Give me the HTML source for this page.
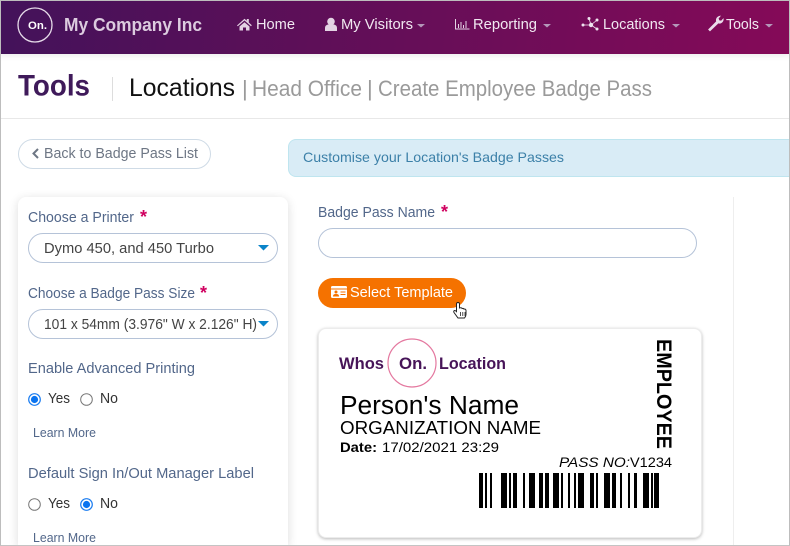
<!DOCTYPE html>
<html><head><meta charset="utf-8"><style>
html,body{margin:0;padding:0;background:#fff;width:790px;height:546px;overflow:hidden}
#p{position:relative;width:790px;height:546px;overflow:hidden;background:#fff;font-family:"Liberation Sans",sans-serif}
#p div{position:absolute;box-sizing:border-box}
svg{position:absolute;left:0;top:0}
</style></head><body><div id="p">
<div style="left:0;top:0;width:790px;height:54px;background:linear-gradient(95deg,#43125a 0%,#5e0f58 40%,#850a58 100%);box-shadow:0 2px 6px rgba(0,0,0,.08)"></div>
<div style="left:0;top:118px;width:790px;height:1px;background:#e8e8e8"></div>
<div style="left:112px;top:77px;width:1px;height:24px;background:#ddd"></div>
<div style="left:18px;top:139px;width:193px;height:30px;border:1px solid #cfdbe6;border-radius:15px"></div>
<div style="left:288px;top:139px;width:502px;height:38px;background:#d9ecf6;border:1px solid #bfe5ef;border-right:0;border-radius:8px 0 0 8px"></div>
<div style="left:18px;top:197px;width:270px;height:349px;background:#fff;border-radius:8px 8px 0 0;box-shadow:0 2px 10px rgba(0,0,0,.14)"></div>
<div style="left:28px;top:233px;width:250px;height:30px;border:1px solid #b5c3d8;border-radius:15px;background:#fff"></div>
<div style="left:28px;top:309px;width:250px;height:30px;border:1px solid #b5c3d8;border-radius:15px;background:#fff"></div>
<div style="left:733px;top:197px;width:1px;height:349px;background:#eee"></div>
<div style="left:318px;top:228px;width:379px;height:30px;border:1px solid #b5c3d8;border-radius:15px"></div>
<div style="left:318px;top:278px;width:148px;height:30px;background:#f57200;border-radius:15px"></div>
<div style="left:318px;top:328px;width:384px;height:210px;background:#fff;border:1px solid #ececec;border-radius:8px;box-shadow:0 1px 3px rgba(0,0,0,.28)"></div>

<svg width="790" height="546" viewBox="0 0 790 546" font-family="'Liberation Sans',sans-serif">
<circle cx="35" cy="25" r="17" fill="none" stroke="#e6dbe9" stroke-width="1.300"/>
<text x="28" y="29" font-size="11" font-weight="700" fill="#fff" textLength="19" lengthAdjust="spacingAndGlyphs">On.</text>
<text x="64" y="31" font-size="18.500" font-weight="700" fill="#dccbdf" textLength="138" lengthAdjust="spacingAndGlyphs">My Company Inc</text>

<g fill="#f1e8f1" font-size="14.500">
<path d="M237 25.500l7.500-6.800 2.300 2v-1.700h2v3.500l3 2.800-.8.900-6.500-5.700-6.700 5.700zM239.500 26.500l5-4.300 5 4.300v4h-3.500v-3h-3v3h-3.500z" fill="#e3d3e3"/>
<text x="256" y="29" textLength="39" lengthAdjust="spacingAndGlyphs">Home</text>
<circle cx="331" cy="21.500" r="3.800" fill="#e3d3e3"/><path d="M325 31v-3c0-2.500 2-3.500 3.500-3.500h5c1.500 0 3.500 1 3.500 3.500v3z" fill="#e3d3e3"/>
<text x="341" y="29" textLength="72" lengthAdjust="spacingAndGlyphs">My Visitors</text>
<text x="473" y="29" textLength="64" lengthAdjust="spacingAndGlyphs">Reporting</text>
<text x="603" y="29" textLength="62" lengthAdjust="spacingAndGlyphs">Locations</text>
<text x="726" y="29" textLength="33" lengthAdjust="spacingAndGlyphs">Tools</text>
</g>
<g fill="#b497b9">
<path d="M417 24h8l-4 3.500zM543 24h8l-4 3.500zM672 24h8l-4 3.500zM765 24h8l-4 3.500z"/>
</g>
<g stroke="#e3d3e3" fill="none" stroke-width="1">
<path d="M455.500 19v10h14"/><path d="M458.500 28v-4M461 28v-6M463.500 28v-3M466 28v-7" />
</g>
<g fill="#efe3ef">
<circle cx="583" cy="25" r="1.500"/><circle cx="589" cy="18.500" r="1.500"/><circle cx="597" cy="20" r="1.500"/><circle cx="597" cy="29" r="1.500"/><circle cx="591" cy="25" r="2.200"/>
<path d="M583 25h8M589 18.500l2 6.500M597 20l-6 5M597 29l-6-4" stroke="#efe3ef" stroke-width=".8"/>
</g>
<path d="M710 31l-1.500-1.500 8-8c-.8-2.500.5-5 3.800-5.500l-2 2.500.8 2 2.200.5 2-2.200c.2 3-2.500 5.200-5 4.200z" fill="#eadcea" stroke="#eadcea" stroke-width=".6"/>

<text x="18" y="95.500" font-size="30" font-weight="700" fill="#3f1a5a" textLength="72" lengthAdjust="spacingAndGlyphs">Tools</text>
<text x="129" y="96" font-size="25" fill="#111" textLength="106" lengthAdjust="spacingAndGlyphs">Locations</text>
<g font-size="22" fill="#9a9a9a">
<text x="242" y="96">|</text>
<text x="252" y="96" textLength="110" lengthAdjust="spacingAndGlyphs">Head Office</text>
<text x="367" y="96">|</text>
<text x="378" y="96" textLength="274" lengthAdjust="spacingAndGlyphs">Create Employee Badge Pass</text>
</g>

<path d="M38 149l-4.500 4.500 4.500 4.500" fill="none" stroke="#6d7684" stroke-width="2"/>
<text x="44" y="158" font-size="14.500" fill="#6d7684" textLength="154" lengthAdjust="spacingAndGlyphs">Back to Badge Pass List</text>
<text x="303" y="162" font-size="14" fill="#3c80a8" textLength="261" lengthAdjust="spacingAndGlyphs">Customise your Location's Badge Passes</text>

<g font-size="14.500" fill="#52678a">
<text x="28" y="222" textLength="106" lengthAdjust="spacingAndGlyphs">Choose a Printer</text>
<text x="28" y="298" textLength="167" lengthAdjust="spacingAndGlyphs">Choose a Badge Pass Size</text>
<text x="28" y="373" textLength="167" lengthAdjust="spacingAndGlyphs">Enable Advanced Printing</text>
<text x="28" y="478" textLength="226" lengthAdjust="spacingAndGlyphs">Default Sign In/Out Manager Label</text>
<text x="318" y="217" textLength="117" lengthAdjust="spacingAndGlyphs">Badge Pass Name</text>
</g>
<g font-size="12.500" fill="#52678a">
<text x="33" y="437" textLength="63" lengthAdjust="spacingAndGlyphs">Learn More</text>
<text x="33" y="542" textLength="63" lengthAdjust="spacingAndGlyphs">Learn More</text>
</g>
<g font-size="18" font-weight="700" fill="#d0005f">
<text x="140" y="223">*</text><text x="200" y="299">*</text><text x="441" y="218">*</text>
</g>
<g font-size="14.500" fill="#444">
<text x="44" y="253" textLength="170" lengthAdjust="spacingAndGlyphs">Dymo 450, and 450 Turbo</text>
<text x="44" y="329" textLength="213" lengthAdjust="spacingAndGlyphs">101 x 54mm (3.976" W x 2.126" H)</text>
</g>
<path d="M258 245h11l-5.500 5.500zM258 321h11l-5.500 5.500z" fill="#0a84c9"/>

<g fill="#fff" stroke="#1a7cf0" stroke-width="1.200"><circle cx="34.500" cy="399.500" r="5.800"/><circle cx="86.500" cy="504.500" r="5.800"/></g>
<circle cx="34.500" cy="399.500" r="3.600" fill="#0a74f0"/><circle cx="86.500" cy="504.500" r="3.600" fill="#0a74f0"/>
<g fill="#fff" stroke="#777" stroke-width="1"><circle cx="86.500" cy="399.500" r="5.800"/><circle cx="34.500" cy="504.500" r="5.800"/></g>
<g font-size="14.500" fill="#333">
<text x="48" y="403" textLength="22" lengthAdjust="spacingAndGlyphs">Yes</text><text x="100" y="403" textLength="18" lengthAdjust="spacingAndGlyphs">No</text>
<text x="48" y="508" textLength="22" lengthAdjust="spacingAndGlyphs">Yes</text><text x="100" y="508" textLength="18" lengthAdjust="spacingAndGlyphs">No</text>
</g>

<rect x="331" y="286" width="16" height="12" rx="1.500" fill="#fff"/>
<rect x="331" y="288.500" width="16" height="1" fill="#f57200"/>
<circle cx="336" cy="292" r="1.500" fill="#f57200"/><path d="M333 296.500c0-2 1-2.500 3-2.500s3 .5 3 2.500z" fill="#f57200"/>
<path d="M340.500 292h5M340.500 294.500h5" stroke="#f57200" stroke-width="1"/>
<text x="350" y="297" font-size="14.500" fill="#fff" textLength="103" lengthAdjust="spacingAndGlyphs">Select Template</text>
<path transform="translate(1,-1)" d="M457 303.500c1 0 1.500.5 1.500 1.500v4l1.200-.3c.8 0 1.200.3 1.400.8 .8-.3 1.600 0 1.900.6 .9-.3 1.900.2 2 1.300v4c0 1.500-.7 2.600-1.500 3.600h-6.500l-4-5.500c-.6-1-.2-1.800.6-2 .5 0 1 .2 1.600.8l.3.300V305c0-1 .5-1.500 1.500-1.500z" fill="#fff" stroke="#222" stroke-width="1"/>
<path transform="translate(1,-1)" d="M459.500 313v4M461.800 313v4M464 313v4" stroke="#222" stroke-width=".8"/>

<text x="339" y="369" font-size="16.500" font-weight="700" fill="#471458" textLength="45" lengthAdjust="spacingAndGlyphs">Whos</text>
<circle cx="412" cy="363" r="24" fill="none" stroke="#e4789f" stroke-width="1.200"/>
<text x="399" y="369" font-size="16.500" font-weight="700" fill="#471458" textLength="28" lengthAdjust="spacingAndGlyphs">On.</text>
<text x="439" y="369" font-size="16.500" font-weight="700" fill="#471458" textLength="67" lengthAdjust="spacingAndGlyphs">Location</text>
<g fill="#000">
<text x="340" y="414" font-size="25.500" textLength="179" lengthAdjust="spacingAndGlyphs">Person's Name</text>
<text x="340" y="434" font-size="18" textLength="201" lengthAdjust="spacingAndGlyphs">ORGANIZATION NAME</text>
<text x="340" y="452" font-size="13.500" font-weight="700" textLength="37" lengthAdjust="spacingAndGlyphs">Date:</text>
<text x="382" y="452" font-size="13.500" textLength="117" lengthAdjust="spacingAndGlyphs">17/02/2021 23:29</text>
<text x="559" y="467" font-size="14" font-style="italic" textLength="71" lengthAdjust="spacingAndGlyphs">PASS NO:</text>
<text x="630" y="467" font-size="14" textLength="42" lengthAdjust="spacingAndGlyphs">V1234</text>
<text transform="translate(657,339) rotate(90)" font-size="21" font-weight="700" textLength="110" lengthAdjust="spacingAndGlyphs">EMPLOYEE</text>
</g>
<path fill="#000" d="M479 473h4v35h-4zM485 473h2v35h-2zM490 473h2v35h-2zM501 473h6v35h-6zM509 473h2v35h-2zM513 473h4v35h-4zM523 473h2v35h-2zM529 473h6v35h-6zM539 473h4v35h-4zM545 473h4v35h-4zM553 473h6v35h-6zM561 473h2v35h-2zM568 473h2v35h-2zM574 473h2v35h-2zM578 473h6v35h-6zM590 473h4v35h-4zM596 473h2v35h-2zM604 473h6v35h-6zM612 473h4v35h-4zM620 473h2v35h-2zM628 473h2v35h-2zM634 473h3v35h-3zM643 473h6v35h-6zM651 473h2v35h-2zM654 473h5v35h-5z"/>
</svg>

<div style="left:0;top:0;width:790px;height:546px;border:1px solid #bdbdbd;border-bottom-color:#c4c4c4"></div>
</div></body></html>
